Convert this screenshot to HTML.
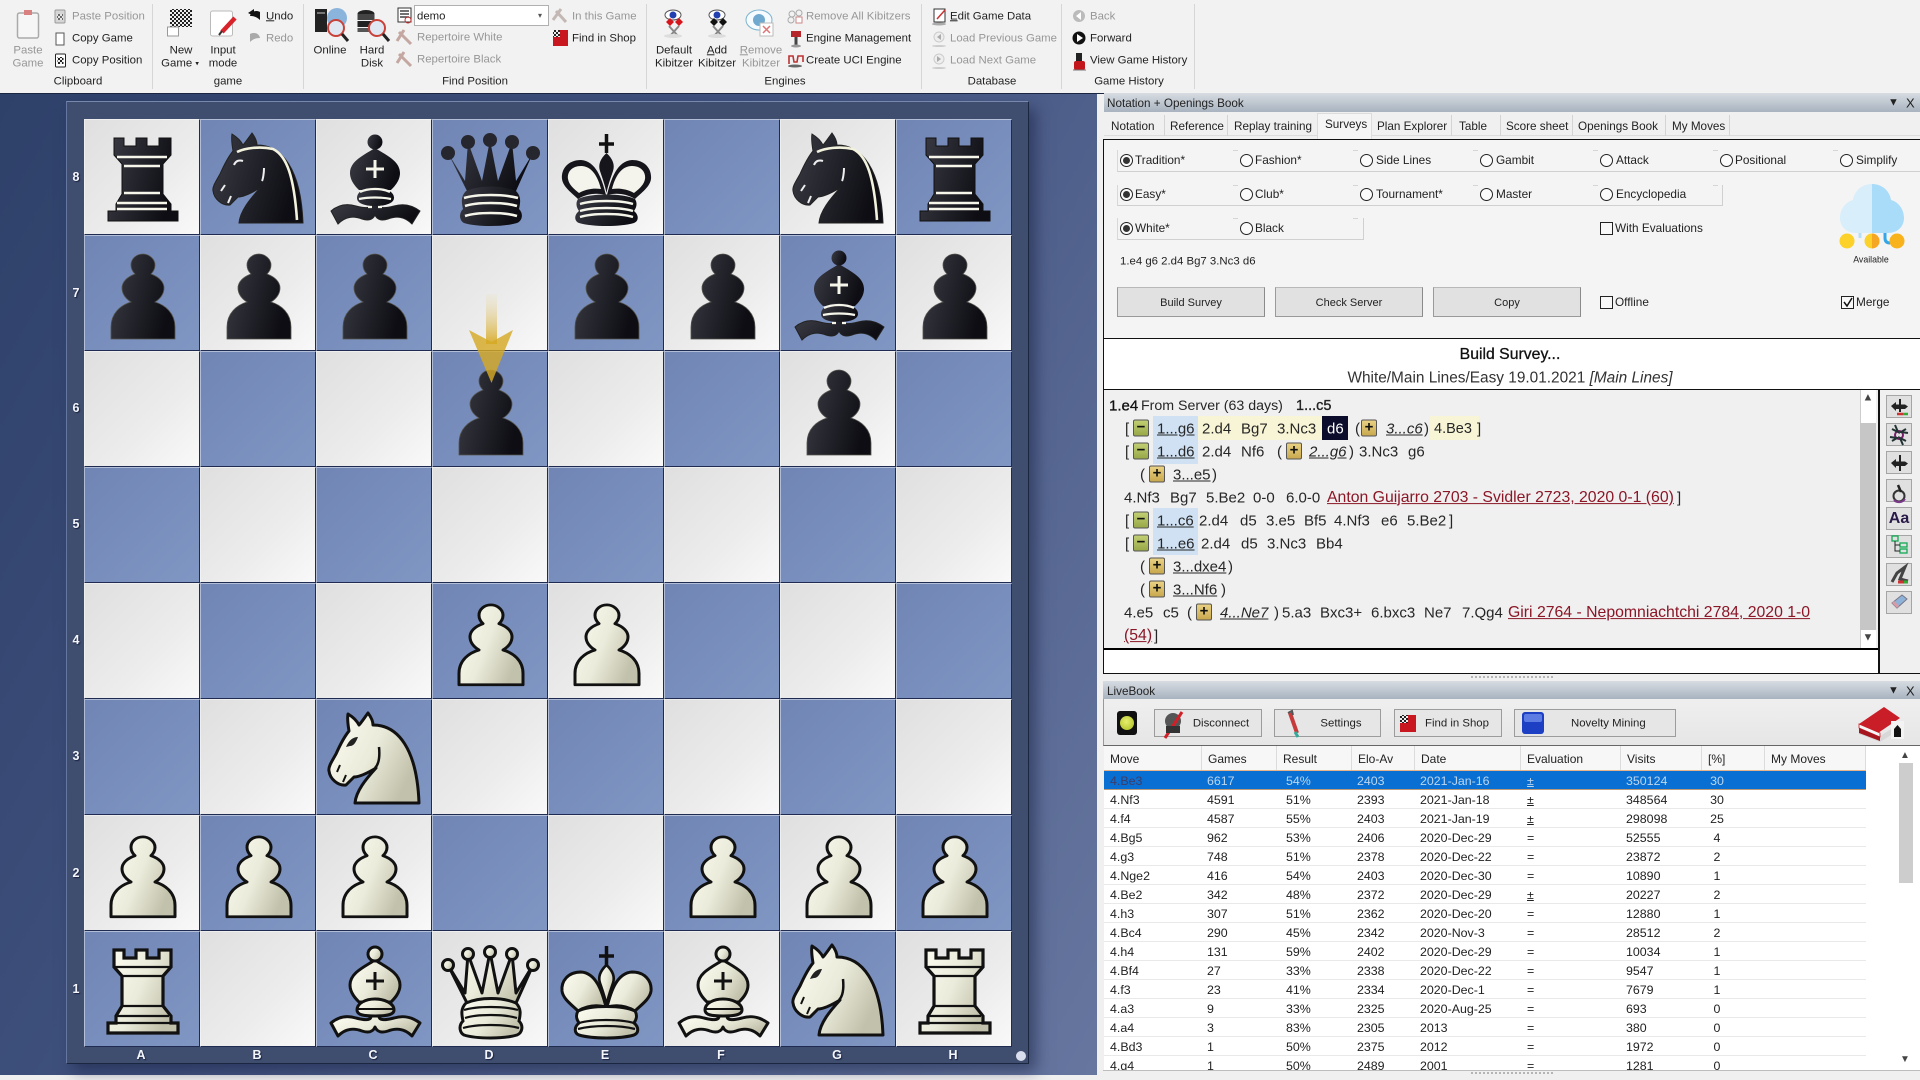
<!DOCTYPE html>
<html><head><meta charset="utf-8"><title>Chess</title>
<style>
html,body{margin:0;padding:0}
body{width:1920px;height:1080px;overflow:hidden;position:relative;background:#f0f0f0;font-family:"Liberation Sans",sans-serif;color:#222}
.t{position:absolute;white-space:nowrap;line-height:1;transform:translateY(calc(-50% + 1px))}
.c{transform:translate(-50%,calc(-50% + 1px));text-align:center}
.d{color:#979797}
#rb{position:absolute;left:0;top:0;width:1920px;height:93px;background:#f2f2f2;border-bottom:1px solid #1b2640;font-size:11.4px;box-sizing:content-box}
.sep{position:absolute;top:4px;height:85px;width:1px;background:#d6d6d6}
#bg{position:absolute;left:0;top:94px;width:1097px;height:981px;background:linear-gradient(120deg,#2e4169 0%,#41527f 45%,#66769f 100%)}
#fr{position:absolute;left:66px;top:101px;width:963px;height:963px;background:#3f4d6f;box-sizing:border-box;border:1px solid #1b2640;border-top-color:#7688ab;border-left-color:#6576a0;box-shadow:7px 7px 14px rgba(25,35,70,.55)}
.lb{color:#f4f6fb;font-weight:bold;font-size:12.5px;text-shadow:1px 1px 1px #1a2340;margin-top:-1px}
.tb{position:absolute;left:1104px;width:816px;height:19px;background:linear-gradient(#d7dce2,#a8b3bf);font-size:11.7px}
.tab{font-size:11.7px}
.vl{position:absolute;top:115px;height:21px;width:1px;background:#d4d4d4}
.r{position:absolute;width:11px;height:11px;border:1px solid #222;border-radius:50%;background:#fbfbfb}
.r.on::after{content:"";position:absolute;left:2px;top:2px;width:7px;height:7px;border-radius:50%;background:#333}
.cb{position:absolute;width:11px;height:11px;border:1px solid #222;background:#f8f8f8}
.grp{position:absolute;box-sizing:border-box;border-left:1px solid #d8d8d8;border-bottom:1px solid #d0d0d0;background:linear-gradient(90deg,transparent 115px,#d5d5d5 115px,#d5d5d5 123px,transparent 123px) 0 0/120px 1px repeat-x}
.btn{position:absolute;box-sizing:border-box;height:30px;top:287px;padding-top:2px;background:#e1e1e1;border:1px solid #9a9a9a;border-right-color:#8a8a8a;border-top-color:#b8b8b8;font-size:11px;display:flex;align-items:center;justify-content:center}
.s{font-size:11.8px}
.n{font-size:15px;color:#262626}
.n i{font-style:italic}
.u{text-decoration:underline}
.lk{color:#8a1626;text-decoration:underline;font-size:15.8px}
.hb{position:absolute;height:24px;background:#cfe1f3}
.hy{position:absolute;height:24px;background:#f8f5d6}
.bx{position:absolute;box-sizing:border-box;width:16px;height:17px;border:1px solid #555;border-radius:2px;font-size:15px;font-weight:bold;line-height:14px;text-align:center;color:#111;transform:translateY(-50%)}
.mi{background:linear-gradient(#c2ce72,#98a948)}
.pl{background:linear-gradient(#e9d183,#c9a94e)}
.sb{position:absolute;left:1886px;width:26px;height:23px;box-sizing:border-box;background:#e0e0e0;border:1px solid #a5a5a5}
.lbtn{position:absolute;top:709px;height:28px;box-sizing:border-box;background:#e6e6e6;border:1px solid #9c9c9c;font-size:11.4px}
table{border-collapse:collapse;table-layout:fixed;font-size:12.4px;color:#222}
td{height:16px;padding:2px 0 0;white-space:nowrap;border-bottom:1px solid #e9e9e9;overflow:hidden}
.hd{position:absolute;top:746px;height:25px;background:#f7f7f7;border-right:1px solid #dcdcdc;box-sizing:border-box;font-size:12px;line-height:27px;padding-left:6px}
tr.sel td{background:#0a6fd2;color:#bcd6ee;border-bottom:1px solid #b89a7a}
tr.sel td:first-child{color:#3f3c66}
td.a{padding-left:6px}td.b{padding-left:5px}td.e{padding-left:9px}td.f{padding-right:33px;text-align:center}
</style></head><body>

<div id="bg"></div>
<div id="fr"></div>
<div class="t c lb" style="left:76px;top:177px">8</div>
<div class="t c lb" style="left:76px;top:293px">7</div>
<div class="t c lb" style="left:76px;top:408px">6</div>
<div class="t c lb" style="left:76px;top:524px">5</div>
<div class="t c lb" style="left:76px;top:640px">4</div>
<div class="t c lb" style="left:76px;top:756px">3</div>
<div class="t c lb" style="left:76px;top:873px">2</div>
<div class="t c lb" style="left:76px;top:989px">1</div>
<div class="t c lb" style="left:141px;top:1055px">A</div>
<div class="t c lb" style="left:257px;top:1055px">B</div>
<div class="t c lb" style="left:373px;top:1055px">C</div>
<div class="t c lb" style="left:489px;top:1055px">D</div>
<div class="t c lb" style="left:605px;top:1055px">E</div>
<div class="t c lb" style="left:721px;top:1055px">F</div>
<div class="t c lb" style="left:837px;top:1055px">G</div>
<div class="t c lb" style="left:953px;top:1055px">H</div>
<div style="position:absolute;left:1016px;top:1051px;width:10px;height:10px;border-radius:50%;background:#d9deec"></div>

<svg width="928" height="928" viewBox="0 0 928 928" style="position:absolute;left:84px;top:119px">
<defs>
<linearGradient id="lq" x1="0" y1="0" x2="1" y2="1"><stop offset="0" stop-color="#dfdfdf"/><stop offset=".6" stop-color="#ececec"/><stop offset="1" stop-color="#f9f9f9"/></linearGradient>
<linearGradient id="dq" x1="0" y1="0" x2="1" y2="1"><stop offset="0" stop-color="#7085b4"/><stop offset="1" stop-color="#8096c3"/></linearGradient>
<linearGradient id="wg" x1="0" y1="0" x2="1" y2=".5"><stop offset="0" stop-color="#fdfdf2"/><stop offset=".55" stop-color="#ebebdb"/><stop offset="1" stop-color="#c2c1ab"/></linearGradient>
<linearGradient id="bg2" x1="0" y1="0" x2="1" y2=".3"><stop offset="0" stop-color="#3b3b45"/><stop offset="1" stop-color="#0d0d13"/></linearGradient>
<linearGradient id="ag" x1="0" y1="0" x2="0" y2="1"><stop offset="0" stop-color="#eadcae" stop-opacity=".15"/><stop offset="1" stop-color="#d9ae32"/></linearGradient>
<pattern id="bd" width="232" height="232" patternUnits="userSpaceOnUse">
<rect width="116" height="116" fill="url(#lq)"/><rect x="116" width="116" height="116" fill="url(#dq)"/>
<rect y="116" width="116" height="116" fill="url(#dq)"/><rect x="116" y="116" width="116" height="116" fill="url(#lq)"/>
<path d="M0 115.5H232M0 231.5H232M115.5 0V232M231.5 0V232" stroke="#1f2b50" stroke-width="1"/>
<path d="M0 .5H232M0 116.5H232M.5 0V232M116.5 0V232" stroke="#fff" stroke-opacity=".45" stroke-width="1"/>
</pattern>

<g id="wR"><path d="M30 19H40V27H52V19H63V27H75V19H87V36L79 45V75L87 85V92H94V102H24V92H32V85L38 75V45L30 36Z" fill="url(#wg)" stroke="#111" stroke-width="3.2" stroke-linejoin="miter"/><path d="M30 36H87M38 45H79M38 75H79M32 85H85M32 92H87" stroke="#111" stroke-width="2.2" fill="none"/></g>
<g id="bR"><path d="M30 19H40V27H52V19H63V27H75V19H87V36L79 45V75L87 85V92H94V102H24V92H32V85L38 75V45L30 36Z" fill="url(#bg2)" stroke="#111" stroke-width="1"/><path d="M33 38H83M40 47H76M40 74H76M33 84H83M33 90H83" stroke="#f6f6ea" stroke-width="2.6" fill="none"/></g>

<g id="wN"><path d="M103 104H39C40 92 50 80 60 69C50 75 42 78 38 78L30 86C22 87 14 80 13 72C12 68 16 62 20 55C24 46 28 38 33 32C32 26 31 20 32 15C37 18 41 22 43 26C45 24 49 18 52 14C55 18 57 22 57 26C82 26 101 50 103 104Z" fill="url(#wg)" stroke="#111" stroke-width="3" stroke-linejoin="round"/><path d="M63 48C64 58 63 65 59 69" stroke="#111" stroke-width="2.5" fill="none"/><path d="M30 48C33 41 37 38 42 38C40 43 38 47 34 47Z" fill="#222"/><path d="M21 73L24 66M27 83L30 76" stroke="#111" stroke-width="2"/></g>
<g id="bN"><path d="M103 104H39C40 92 50 80 60 69C50 75 42 78 38 78L30 86C22 87 14 80 13 72C12 68 16 62 20 55C24 46 28 38 33 32C32 26 31 20 32 15C37 18 41 22 43 26C45 24 49 18 52 14C55 18 57 22 57 26C82 26 101 50 103 104Z" fill="url(#bg2)" stroke="#222" stroke-width="1"/><path d="M37 33C45 29 60 27 73 30C87 37 94 58 97 101" stroke="#f3f2dd" stroke-width="2.6" fill="none"/><path d="M34 46C36 41 40 41 43 42M21 72L25 66M28 84L31 77M64 49C64 54 63 60 62 62" stroke="#eee" stroke-width="2" fill="none"/></g>

<g id="wB"><path d="M55 85C55 90 48 89 40 87C30 84 22 86 15 92L22 105C30 97 38 97 46 100C52 102 57 101 59 96C61 101 66 102 72 100C80 97 88 97 96 105L104 92C96 86 88 84 78 87C70 89 63 90 63 85Z" fill="url(#wg)" stroke="#111" stroke-width="3" stroke-linejoin="round"/><path d="M59 29C48 36 34 42 34 54C34 62 40 68 43 71H75C78 68 84 62 84 54C84 42 70 36 59 29Z" fill="url(#wg)" stroke="#111" stroke-width="3"/><path d="M41 79C41 72 50 68 59 68C68 68 78 72 78 79C78 84 70 85 59 85C48 85 41 84 41 79Z" fill="url(#wg)" stroke="#111" stroke-width="3"/><path d="M41 78H78" stroke="#111" stroke-width="2"/><circle cx="59" cy="23" r="7" fill="url(#wg)" stroke="#111" stroke-width="3"/><path d="M59 41V59M50 50H68" stroke="#111" stroke-width="3"/></g>
<g id="bB"><path d="M55 85C55 90 48 89 40 87C30 84 22 86 15 92L22 105C30 97 38 97 46 100C52 102 57 101 59 96C61 101 66 102 72 100C80 97 88 97 96 105L104 92C96 86 88 84 78 87C70 89 63 90 63 85Z" fill="url(#bg2)" stroke="#222"/><path d="M59 29C48 36 34 42 34 54C34 62 40 68 43 71H75C78 68 84 62 84 54C84 42 70 36 59 29Z" fill="url(#bg2)"/><path d="M41 79C41 72 50 68 59 68C68 68 78 72 78 79C78 84 70 87 59 87C48 87 41 84 41 79Z" fill="url(#bg2)"/><circle cx="59" cy="23" r="7.5" fill="url(#bg2)"/><path d="M59 41V59M50 50H68" stroke="#f5f5ea" stroke-width="3"/><path d="M44 73C52 69 66 69 74 73M43 80C52 78 66 78 75 80M52 88H56M62 88H66" stroke="#f5f5ea" stroke-width="2.2" fill="none"/></g>

<g id="wQ"><path d="M16 34L35 72H84L101 34L84 62L80 23L66 62L58 21L50 62L36 23L33 62Z" fill="url(#wg)" stroke="#111" stroke-width="3" stroke-linejoin="round"/><path d="M34 72C28 78 30 85 31 90C26 95 28 102 32 104C45 108 72 108 85 104C90 102 92 95 87 90C88 85 90 78 84 72C70 66 48 66 34 72Z" fill="url(#wg)" stroke="#111" stroke-width="3"/><path d="M32 79C45 75 72 75 86 79M33 87C45 83 72 83 85 87M31 97C45 93 72 93 87 97" stroke="#111" stroke-width="2.2" fill="none"/><g fill="url(#wg)" stroke="#111" stroke-width="3"><circle cx="16" cy="34" r="5.5"/><circle cx="36" cy="23" r="5.5"/><circle cx="58" cy="21" r="5.5"/><circle cx="80" cy="23" r="5.5"/><circle cx="101" cy="34" r="5.5"/></g></g>
<g id="bQ"><path d="M16 34L35 72H84L101 34L84 62L80 23L66 62L58 21L50 62L36 23L33 62Z" fill="url(#bg2)"/><path d="M34 72C28 78 30 85 31 90C26 95 28 102 32 104C45 108 72 108 85 104C90 102 92 95 87 90C88 85 90 78 84 72C70 66 48 66 34 72Z" fill="url(#bg2)"/><path d="M32 79C45 75 72 75 86 79M33 87C45 83 72 83 85 87M33 97C45 93 72 93 85 97" stroke="#f5f5ea" stroke-width="2.6" fill="none"/><g fill="#26262e"><circle cx="16" cy="34" r="7"/><circle cx="36" cy="23" r="7"/><circle cx="58" cy="21" r="7"/><circle cx="80" cy="23" r="7"/><circle cx="101" cy="34" r="7"/></g></g>

<g id="wK"><path d="M58 76C54 60 48 42 33 41C20 41 13 50 14 60C15 68 24 74 30 80C40 74 50 74 58 76Z" fill="url(#wg)" stroke="#111" stroke-width="3"/><path d="M59 76C63 60 69 42 84 41C97 41 104 50 103 60C102 68 93 74 87 80C77 74 67 74 59 76Z" fill="url(#wg)" stroke="#111" stroke-width="3"/><path d="M58.5 34C52 40 50 46 52 52C54 58 57 66 58.5 74C60 66 63 58 65 52C67 46 65 40 58.5 34Z" fill="url(#wg)" stroke="#111" stroke-width="2.6"/><path d="M58.5 15V34M51 25H66" stroke="#111" stroke-width="3.5"/><path d="M30 80C42 74 75 74 87 80C90 85 88 89 86 92C91 96 91 102 86 104C72 108 45 108 31 104C26 102 26 96 31 92C29 89 27 85 30 80Z" fill="url(#wg)" stroke="#111" stroke-width="3"/><path d="M31 92C45 88 72 88 86 92M30 98C45 94 72 94 87 98" stroke="#111" stroke-width="2.2" fill="none"/></g>
<g id="bK"><path d="M58 76C54 60 48 42 33 41C20 41 13 50 14 60C15 68 24 74 30 80C40 74 50 74 58 76Z" fill="#15151b"/><path d="M59 76C63 60 69 42 84 41C97 41 104 50 103 60C102 68 93 74 87 80C77 74 67 74 59 76Z" fill="#15151b"/><path d="M53 70C50 58 44 47 33 47C24 47 19 53 20 60C21 66 26 70 31 74C38 70 46 69 53 70Z" fill="#f4f4ec"/><path d="M64 70C67 58 73 47 84 47C93 47 98 53 97 60C96 66 91 70 86 74C79 70 71 69 64 70Z" fill="#f4f4ec"/><path d="M58.5 34C52 40 50 46 52 52C54 58 57 66 58.5 74C60 66 63 58 65 52C67 46 65 40 58.5 34Z" fill="#15151b"/><path d="M58.5 15V34M51 25H66" stroke="#111" stroke-width="3.5"/><path d="M30 80C42 74 75 74 87 80C90 85 88 89 86 92C91 96 91 102 86 104C72 108 45 108 31 104C26 102 26 96 31 92C29 89 27 85 30 80Z" fill="url(#bg2)"/><path d="M32 85C45 81 72 81 85 85M32 92C45 88 72 88 85 92M32 98C45 94 72 94 85 98" stroke="#f5f5ea" stroke-width="2.4" fill="none"/></g>

<g id="wP"><path transform="translate(0 4) scale(1 .94)" d="M59 19C52 19 47 24 47 30C47 34 49 37 51 39C43 42 38 47 38 53C38 59 42 64 47 67C37 70 27 78 27 92V104H91V92C91 78 81 70 71 67C76 64 80 59 80 53C80 47 75 42 67 39C69 37 71 34 71 30C71 24 65 19 59 19Z" fill="url(#wg)" stroke="#111" stroke-width="3" stroke-linejoin="round"/></g>
<g id="bP"><path d="M59 19C52 19 47 24 47 30C47 34 49 37 51 39C43 42 38 47 38 53C38 59 42 64 47 67C37 70 27 78 27 92V104H91V92C91 78 81 70 71 67C76 64 80 59 80 53C80 47 75 42 67 39C69 37 71 34 71 30C71 24 65 19 59 19Z" fill="url(#bg2)" stroke="#55554f" stroke-width=".8"/></g>
</defs>
<rect width="928" height="928" fill="url(#bd)"/>
<use href="#bR" x="0" y="0"/><use href="#bN" x="116" y="0"/><use href="#bB" x="232" y="0"/><use href="#bQ" x="348" y="0"/><use href="#bK" x="464" y="0"/><use href="#bN" x="696" y="0"/><use href="#bR" x="812" y="0"/>
<use href="#bP" x="0" y="116"/><use href="#bP" x="116" y="116"/><use href="#bP" x="232" y="116"/><use href="#bP" x="464" y="116"/><use href="#bP" x="580" y="116"/><use href="#bB" x="696" y="116"/><use href="#bP" x="812" y="116"/>
<use href="#bP" x="348" y="232"/><use href="#bP" x="696" y="232"/>
<use href="#wP" x="348" y="464"/><use href="#wP" x="464" y="464"/>
<use href="#wN" x="232" y="580"/>
<use href="#wP" x="0" y="696"/><use href="#wP" x="116" y="696"/><use href="#wP" x="232" y="696"/><use href="#wP" x="580" y="696"/><use href="#wP" x="696" y="696"/><use href="#wP" x="812" y="696"/>
<use href="#wR" x="0" y="812"/><use href="#wB" x="232" y="812"/><use href="#wQ" x="348" y="812"/><use href="#wK" x="464" y="812"/><use href="#wB" x="580" y="812"/><use href="#wN" x="696" y="812"/><use href="#wR" x="812" y="812"/>
<rect x="402" y="175" width="11" height="50" fill="url(#ag)"/>
<path d="M385 211L407.500 264L429 211L407.500 223Z" fill="#d6a926" fill-opacity=".82"/>
</svg>

<!-- RIBBON -->
<div id="rb">
<div class="sep" style="left:152px"></div><div class="sep" style="left:303px"></div><div class="sep" style="left:646px"></div><div class="sep" style="left:921px"></div><div class="sep" style="left:1061px"></div><div class="sep" style="left:1194px"></div>
<svg width="1200" height="93" viewBox="0 0 1200 93" style="position:absolute;left:0;top:0">
<defs><pattern id="ck" width="4" height="4" patternUnits="userSpaceOnUse"><rect width="4" height="4" fill="#eee"/><rect width="2" height="2" fill="#222"/><rect x="2" y="2" width="2" height="2" fill="#222"/></pattern>
<g id="mg"><circle r="8" fill="#dfe8f2" stroke="#c9423a" stroke-width="2"/><path d="M6 6L12 13" stroke="#222" stroke-width="3"/></g>
<g id="ey"><ellipse cx="9" cy="6" rx="8" ry="5" fill="#fff" stroke="#555"/><circle cx="9" cy="6" r="3.500" fill="#2240b0"/></g>
</defs>
<!-- clipboard -->
<rect x="17.500" y="13" width="21" height="25" rx="2" fill="#f6f6f6" stroke="#aaa" stroke-width="1.500"/><rect x="24" y="10" width="8" height="5" fill="#d98080"/>
<rect x="55" y="10" width="10" height="13" rx="1" fill="#d5d5d5" stroke="#999"/><rect x="57" y="14" width="6" height="6" fill="url(#ck)" opacity=".6"/>
<path d="M56 33H64V45H56Z" fill="#fff" stroke="#555"/>
<rect x="55.500" y="54" width="10" height="13" rx="1" fill="#fff" stroke="#222"/><rect x="57.500" y="57" width="6" height="7" fill="url(#ck)"/>
<!-- new game -->
<rect x="170" y="9" width="22" height="18" fill="url(#ck)"/><rect x="167.500" y="27" width="11" height="9" fill="#fff" stroke="#999"/>
<rect x="210.500" y="11" width="22" height="25" rx="2" fill="#fff" stroke="#bbb"/><path d="M222 32L235 18" stroke="#d8232a" stroke-width="4.500"/><path d="M219 35L222 31" stroke="#333" stroke-width="2"/>
<path d="M250 16C251 11 256 10 260 12V20C257 17 254 16 250 16Z" fill="#111"/><path d="M248 13L254 9V16Z" fill="#111"/>
<path d="M260 38C259 33 254 32 250 34V42C253 39 256 38 260 38Z" fill="#a9a9a9"/>
<!-- online -->
<rect x="315" y="9" width="12" height="23" fill="#222"/><rect x="317" y="12" width="8" height="2" fill="#777"/><circle cx="337" cy="18" r="10" fill="#8ab4dc"/><use href="#mg" x="336" y="28"/>
<!-- hard disk -->
<ellipse cx="366" cy="14" rx="8.500" ry="4" fill="#222"/><rect x="357.500" y="14" width="17" height="6" fill="#444"/><rect x="357.500" y="21" width="17" height="6" fill="#222"/><rect x="357.500" y="28" width="17" height="4" fill="#555"/><use href="#mg" x="377" y="28"/>
<rect x="398" y="8" width="13" height="14" fill="#fff" stroke="#333"/><path d="M400 11H409M400 14H409M400 17H409" stroke="#444" stroke-width="1.500"/><circle cx="408" cy="20" r="3" fill="none" stroke="#b33"/>
<path d="M399 32L411 44M404 30L397 41" stroke="#c4a7a0" stroke-width="3"/><path d="M399 54L411 66M404 52L397 63" stroke="#c4a7a0" stroke-width="3"/>
<path d="M556 11L566 22M561 9L553 20" stroke="#c4b8b4" stroke-width="3"/>
<rect x="553" y="30" width="15" height="16" fill="#c8171e"/><rect x="553" y="30" width="7" height="7" fill="url(#ck)"/>
<!-- kibitzers -->
<use href="#ey" x="664" y="9"/><path d="M666 22L670 18L674 22L670 26ZM675 22L679 18L683 22L679 26Z" fill="#d5161c"/><path d="M669 26L678 36M679 26L670 36" stroke="#888" stroke-width="2"/><ellipse cx="673" cy="36" rx="9" ry="2" fill="#ddd"/>
<use href="#ey" x="708" y="9"/><path d="M710 22L714 18L718 22L714 26ZM719 22L723 18L727 22L723 26Z" fill="#111"/><path d="M713 26L722 36M723 26L714 36" stroke="#888" stroke-width="2"/><ellipse cx="717" cy="36" rx="9" ry="2" fill="#ddd"/>
<ellipse cx="759" cy="20" rx="13" ry="10" fill="#f5fbff" stroke="#7cb3cf"/><circle cx="759" cy="20" r="6" fill="#6fa9cf"/><rect x="760" y="23" width="13" height="13" fill="#fff" stroke="#bbb"/><path d="M763 26L770 33M770 26L763 33" stroke="#d77" stroke-width="1.500"/>
<circle cx="792" cy="14" r="3" fill="none" stroke="#aaa"/><circle cx="799" cy="13" r="3" fill="none" stroke="#aaa"/><circle cx="791" cy="20" r="3" fill="none" stroke="#aaa"/><rect x="796" y="17" width="6" height="6" fill="#fff" stroke="#c88"/>
<rect x="791" y="31" width="10" height="6" fill="#b5262a"/><path d="M796 37V46" stroke="#444" stroke-width="3"/><ellipse cx="796" cy="46" rx="5" ry="1.500" fill="#999"/>
<path d="M789 64V56H793L794 62H797L798 56H803V62" fill="none" stroke="#b33" stroke-width="1.600"/><ellipse cx="795" cy="66" rx="7" ry="1.500" fill="#666"/>
<!-- db -->
<rect x="934" y="9" width="11" height="13" fill="#fff" stroke="#333"/><path d="M937 19L945 10" stroke="#c33" stroke-width="1.500"/><ellipse cx="939" cy="24" rx="7" ry="1.500" fill="#aaa"/>
<circle cx="939" cy="37" r="5" fill="#eee" stroke="#ccc"/><path d="M941 34L937 37L941 40Z" fill="#aaa"/><ellipse cx="939" cy="46" rx="7" ry="1" fill="#ccc"/>
<circle cx="939" cy="59" r="5" fill="#eee" stroke="#ccc"/><path d="M937 56L941 59L937 62Z" fill="#aaa"/><ellipse cx="939" cy="68" rx="7" ry="1" fill="#ccc"/>
<!-- history -->
<circle cx="1079" cy="16" r="6" fill="#bbb"/><path d="M1081 12L1076 16L1081 20Z" fill="#fff"/>
<circle cx="1079" cy="38" r="6.500" fill="#111"/><path d="M1077 34L1083 38L1077 42Z" fill="#fff"/>
<rect x="1074" y="61" width="11" height="9" rx="2" fill="#c3161c"/><rect x="1076" y="53" width="6" height="8" fill="#222"/><path d="M1073 70H1086" stroke="#777"/>
</svg>
<div class="t d c" style="left:28px;top:50px">Paste</div><div class="t d c" style="left:28px;top:63px">Game</div>
<div class="t d" style="left:72px;top:16px">Paste Position</div><div class="t" style="left:72px;top:38px">Copy Game</div><div class="t" style="left:72px;top:60px">Copy Position</div>
<div class="t c" style="left:78px;top:81px">Clipboard</div>
<div class="t c" style="left:181px;top:50px">New</div><div class="t c" style="left:180px;top:63px">Game <span style="font-size:7px;vertical-align:1px">▾</span></div>
<div class="t c" style="left:223px;top:50px">Input</div><div class="t c" style="left:223px;top:63px">mode</div>
<div class="t" style="left:266px;top:16px"><span class="u">U</span>ndo</div><div class="t d" style="left:266px;top:38px">Redo</div>
<div class="t c" style="left:228px;top:81px">game</div>
<div class="t c" style="left:330px;top:50px">Online</div>
<div class="t c" style="left:372px;top:50px">Hard</div><div class="t c" style="left:372px;top:63px">Disk</div>
<div style="position:absolute;left:414px;top:5px;width:135px;height:21px;box-sizing:border-box;background:#fff;border:1px solid #b0b0b0"></div>
<div class="t" style="left:417px;top:16px">demo</div><div class="t" style="left:538px;top:15px;font-size:8px;color:#555">▾</div>
<div class="t d" style="left:417px;top:37px">Repertoire White</div><div class="t d" style="left:417px;top:59px">Repertoire Black</div>
<div class="t d" style="left:572px;top:16px">In this Game</div><div class="t" style="left:572px;top:38px">Find in Shop</div>
<div class="t c" style="left:475px;top:81px">Find Position</div>
<div class="t c" style="left:674px;top:50px">Default</div><div class="t c" style="left:674px;top:63px">Kibitzer</div>
<div class="t c" style="left:717px;top:50px"><span class="u">A</span>dd</div><div class="t c" style="left:717px;top:63px">Kibitzer</div>
<div class="t d c" style="left:761px;top:50px"><span class="u">R</span>emove</div><div class="t d c" style="left:761px;top:63px">Kibitzer</div>
<div class="t d" style="left:806px;top:16px">Remove All Kibitzers</div><div class="t" style="left:806px;top:38px">Engine Management</div><div class="t" style="left:806px;top:60px">Create UCI Engine</div>
<div class="t c" style="left:785px;top:81px">Engines</div>
<div class="t" style="left:950px;top:16px"><span class="u">E</span>dit Game Data</div><div class="t d" style="left:950px;top:38px">Load Previous Game</div><div class="t d" style="left:950px;top:60px">Load Next Game</div>
<div class="t c" style="left:992px;top:81px">Database</div>
<div class="t d" style="left:1090px;top:16px">Back</div><div class="t" style="left:1090px;top:38px">Forward</div><div class="t" style="left:1090px;top:60px">View Game History</div>
<div class="t c" style="left:1129px;top:81px">Game History</div>
</div>

<!-- PANEL 1 -->
<div class="tb" style="top:93px"></div>
<div class="t" style="left:1107px;top:103px;font-size:11.7px">Notation + Openings Book</div>
<div class="t" style="left:1888px;top:102px;font-size:11px">▼</div><div class="t" style="left:1906px;top:102px;font-size:13px">X</div>
<div style="position:absolute;left:1104px;top:112px;width:816px;height:27px;background:#f0f0f0"></div>
<div style="position:absolute;left:1104px;top:135px;width:816px;height:1px;background:#dcdcdc"></div>
<div style="position:absolute;left:1317px;top:113px;width:55px;height:26px;background:#f5f5f5;border:1px solid #dcdcdc;border-bottom:none;box-sizing:border-box"></div>
<div class="vl" style="left:1164px"></div><div class="vl" style="left:1227px"></div><div class="vl" style="left:1451px"></div><div class="vl" style="left:1500px"></div><div class="vl" style="left:1572px"></div><div class="vl" style="left:1665px"></div><div class="vl" style="left:1729px"></div>
<div class="t tab" style="left:1111px;top:126px">Notation</div><div class="t tab" style="left:1170px;top:126px">Reference</div><div class="t tab" style="left:1234px;top:126px">Replay training</div><div class="t tab" style="left:1325px;top:124px">Surveys</div><div class="t tab" style="left:1377px;top:126px">Plan Explorer</div><div class="t tab" style="left:1459px;top:126px">Table</div><div class="t tab" style="left:1506px;top:126px">Score sheet</div><div class="t tab" style="left:1578px;top:126px">Openings Book</div><div class="t tab" style="left:1672px;top:126px">My Moves</div>

<div style="position:absolute;left:1103px;top:139px;width:817px;height:200px;box-sizing:border-box;background:#f4f4f4;border:1px solid #111;border-right:none"></div>
<div class="grp" style="left:1117px;top:150px;width:803px;height:22px"></div>
<div class="grp" style="left:1117px;top:185px;width:606px;height:21px;border-right:1px solid #d0d0d0"></div>
<div class="grp" style="left:1117px;top:218px;width:247px;height:22px;border-right:1px solid #d0d0d0"></div>

<div class="r on" style="left:1120px;top:154px"></div><div class="r" style="left:1240px;top:154px"></div><div class="r" style="left:1360px;top:154px"></div><div class="r" style="left:1480px;top:154px"></div><div class="r" style="left:1600px;top:154px"></div><div class="r" style="left:1720px;top:154px"></div><div class="r" style="left:1840px;top:154px"></div>
<div class="t s" style="left:1135px;top:160px">Tradition*</div><div class="t s" style="left:1255px;top:160px">Fashion*</div><div class="t s" style="left:1376px;top:160px">Side Lines</div><div class="t s" style="left:1496px;top:160px">Gambit</div><div class="t s" style="left:1616px;top:160px">Attack</div><div class="t s" style="left:1735px;top:160px">Positional</div><div class="t s" style="left:1856px;top:160px">Simplify</div>
<div class="r on" style="left:1120px;top:188px"></div><div class="r" style="left:1240px;top:188px"></div><div class="r" style="left:1360px;top:188px"></div><div class="r" style="left:1480px;top:188px"></div><div class="r" style="left:1600px;top:188px"></div>
<div class="t s" style="left:1135px;top:194px">Easy*</div><div class="t s" style="left:1255px;top:194px">Club*</div><div class="t s" style="left:1376px;top:194px">Tournament*</div><div class="t s" style="left:1496px;top:194px">Master</div><div class="t s" style="left:1616px;top:194px">Encyclopedia</div>
<div class="r on" style="left:1120px;top:222px"></div><div class="r" style="left:1240px;top:222px"></div>
<div class="t s" style="left:1135px;top:228px">White*</div><div class="t s" style="left:1255px;top:228px">Black</div>
<div class="cb" style="left:1600px;top:222px"></div><div class="t s" style="left:1615px;top:228px">With Evaluations</div>
<div class="t s" style="left:1120px;top:261px;font-size:11.4px">1.e4 g6 2.d4 Bg7 3.Nc3 d6</div>
<div class="btn" style="left:1117px;width:148px">Build Survey</div><div class="btn" style="left:1275px;width:148px">Check Server</div><div class="btn" style="left:1433px;width:148px">Copy</div>
<div class="cb" style="left:1600px;top:296px"></div><div class="t s" style="left:1615px;top:302px">Offline</div>
<div class="cb" style="left:1841px;top:296px"></div><div class="t s" style="left:1856px;top:302px">Merge</div>
<svg width="14" height="14" style="position:absolute;left:1841px;top:295px"><path d="M3 7L6 11L11 3" stroke="#111" stroke-width="1.500" fill="none"/></svg>
<svg width="80" height="72" viewBox="1835 180 80 72" style="position:absolute;left:1835px;top:180px">
<path d="M1872 184C1861 184 1854 192 1853 200C1845 202 1840 210 1840 218C1840 227 1847 233 1856 233H1872Z" fill="#d8eefb"/><path d="M1872 184C1883 184 1890 192 1891 200C1899 202 1904 210 1904 218C1904 227 1897 233 1888 233H1872Z" fill="#a9dcf9"/>
<path d="M1885 233V238Q1885 243 1890 243" stroke="#35a7e8" stroke-width="3" fill="none"/>
<path d="M1860 233V238" stroke="#b7e0f8" stroke-width="3"/>
<circle cx="1847" cy="241" r="7.500" fill="#fbd12a"/><circle cx="1872" cy="241" r="7.500" fill="#fbd12a"/><path d="M1872 233.500a7.500 7.500 0 0 1 0 15Z" fill="#f5a623"/><circle cx="1897" cy="241" r="7.500" fill="#f8b21c"/>
</svg>
<div class="t c" style="left:1871px;top:259px;font-size:8.800px">Available</div>

<!-- PANEL 2 -->
<div style="position:absolute;left:1103px;top:338px;width:817px;height:51px;box-sizing:border-box;background:#fff;border:1px solid #111;border-right:none;border-bottom:none"></div>
<div class="t c" style="left:1510px;top:354px;font-size:15.800px;color:#111;-webkit-text-stroke:.3px #111">Build Survey...</div>
<div class="t c" style="left:1510px;top:377px;font-size:15.400px;color:#333">White/Main Lines/Easy 19.01.2021 <i>[Main Lines]</i></div>
<div style="position:absolute;left:1103px;top:389px;width:817px;height:285px;box-sizing:border-box;background:#f0f0f0;border:1px solid #111;border-right:none;border-width:1px 0 1px 1px"></div>
<div style="position:absolute;left:1104px;top:650px;width:774px;height:23px;background:#fff"></div>
<div style="position:absolute;left:1104px;top:648px;width:774px;height:2px;background:#000"></div>
<div style="position:absolute;left:1878px;top:389px;width:1.500px;height:285px;background:#111"></div>
<!-- scrollbar -->
<div style="position:absolute;left:1860px;top:390px;width:16px;height:258px;background:#fff;border-left:1px solid #ccc;box-sizing:border-box"></div>
<div style="position:absolute;left:1860px;top:423px;width:16px;height:207px;background:#c6c6c6"></div>
<div class="t c" style="left:1868px;top:397px;font-size:11px;color:#444">▲</div><div class="t c" style="left:1868px;top:637px;font-size:11px;color:#444">▼</div>

<div class="hb" style="left:1153px;top:416px;width:45px"></div>
<div class="hy" style="left:1198px;top:416px;width:124px"></div>
<div class="hy" style="left:1430px;top:416px;width:49px"></div>
<div class="hb" style="left:1153px;top:440px;width:45px"></div>
<div class="hb" style="left:1153px;top:508px;width:45px"></div>
<div class="hb" style="left:1153px;top:531px;width:45px"></div>
<div style="position:absolute;left:1322px;top:416px;width:26px;height:24px;background:#0b0b2c"></div>

<div class="t n" style="left:1109px;top:405px;color:#111;-webkit-text-stroke:.3px #111">1.e4</div><div class="t n" style="left:1141px;top:405px;font-size:14.200px">From Server (63 days)</div><div class="t n" style="left:1296px;top:405px;-webkit-text-stroke:.3px #111;font-size:14.500px">1...c5</div>

<div class="t n" style="left:1125px;top:428px">[</div><div class="bx mi" style="left:1133px;top:428px">−</div><div class="t n u" style="left:1157px;top:428px">1...g6</div><div class="t n" style="left:1202px;top:428px">2.d4</div><div class="t n" style="left:1241px;top:428px">Bg7</div><div class="t n" style="left:1277px;top:428px">3.Nc3</div><div class="t n" style="left:1327px;top:428px;color:#fff">d6</div><div class="t n" style="left:1355px;top:428px">(</div><div class="bx pl" style="left:1361px;top:428px">+</div><div class="t n u" style="left:1386px;top:428px"><i>3...c6</i></div><div class="t n" style="left:1424px;top:428px">)</div><div class="t n" style="left:1434px;top:428px;font-size:14.500px">4.Be3</div><div class="t n" style="left:1477px;top:428px">]</div>

<div class="t n" style="left:1125px;top:451px">[</div><div class="bx mi" style="left:1133px;top:451px">−</div><div class="t n u" style="left:1157px;top:451px">1...d6</div><div class="t n" style="left:1202px;top:451px">2.d4</div><div class="t n" style="left:1241px;top:451px">Nf6</div><div class="t n" style="left:1277px;top:451px">(</div><div class="bx pl" style="left:1286px;top:451px">+</div><div class="t n u" style="left:1309px;top:451px"><i>2...g6</i></div><div class="t n" style="left:1349px;top:451px">)</div><div class="t n" style="left:1359px;top:451px">3.Nc3</div><div class="t n" style="left:1408px;top:451px">g6</div>

<div class="t n" style="left:1140px;top:474px">(</div><div class="bx pl" style="left:1149px;top:474px">+</div><div class="t n u" style="left:1173px;top:474px">3...e5</div><div class="t n" style="left:1212px;top:474px">)</div>

<div class="t n" style="left:1124px;top:497px">4.Nf3</div><div class="t n" style="left:1170px;top:497px">Bg7</div><div class="t n" style="left:1206px;top:497px">5.Be2</div><div class="t n" style="left:1253px;top:497px">0-0</div><div class="t n" style="left:1286px;top:497px">6.0-0</div><div class="t n lk" style="left:1327px;top:497px">Anton Guijarro 2703 - Svidler 2723, 2020 0-1 (60)</div><div class="t n" style="left:1677px;top:497px">]</div>

<div class="t n" style="left:1125px;top:520px">[</div><div class="bx mi" style="left:1133px;top:520px">−</div><div class="t n u" style="left:1157px;top:520px">1...c6</div><div class="t n" style="left:1199px;top:520px">2.d4</div><div class="t n" style="left:1240px;top:520px">d5</div><div class="t n" style="left:1266px;top:520px">3.e5</div><div class="t n" style="left:1304px;top:520px">Bf5</div><div class="t n" style="left:1334px;top:520px">4.Nf3</div><div class="t n" style="left:1381px;top:520px">e6</div><div class="t n" style="left:1407px;top:520px">5.Be2</div><div class="t n" style="left:1449px;top:520px">]</div>

<div class="t n" style="left:1125px;top:543px">[</div><div class="bx mi" style="left:1133px;top:543px">−</div><div class="t n u" style="left:1157px;top:543px">1...e6</div><div class="t n" style="left:1201px;top:543px">2.d4</div><div class="t n" style="left:1241px;top:543px">d5</div><div class="t n" style="left:1267px;top:543px">3.Nc3</div><div class="t n" style="left:1316px;top:543px">Bb4</div>

<div class="t n" style="left:1140px;top:566px">(</div><div class="bx pl" style="left:1149px;top:566px">+</div><div class="t n u" style="left:1173px;top:566px">3...dxe4</div><div class="t n" style="left:1228px;top:566px">)</div>
<div class="t n" style="left:1140px;top:589px">(</div><div class="bx pl" style="left:1149px;top:589px">+</div><div class="t n u" style="left:1173px;top:589px">3...Nf6</div><div class="t n" style="left:1221px;top:589px">)</div>

<div class="t n" style="left:1124px;top:612px">4.e5</div><div class="t n" style="left:1163px;top:612px">c5</div><div class="t n" style="left:1187px;top:612px">(</div><div class="bx pl" style="left:1196px;top:612px">+</div><div class="t n u" style="left:1220px;top:612px"><i>4...Ne7</i></div><div class="t n" style="left:1274px;top:612px">)</div><div class="t n" style="left:1282px;top:612px">5.a3</div><div class="t n" style="left:1320px;top:612px">Bxc3+</div><div class="t n" style="left:1371px;top:612px">6.bxc3</div><div class="t n" style="left:1424px;top:612px">Ne7</div><div class="t n" style="left:1462px;top:612px">7.Qg4</div><div class="t n lk" style="left:1508px;top:612px">Giri 2764 - Nepomniachtchi 2784, 2020 1-0</div>
<div class="t n lk" style="left:1124px;top:635px">(54)</div><div class="t n" style="left:1154px;top:635px">]</div>

<!-- side buttons -->
<div class="sb" style="top:395px"></div><div class="sb" style="top:423px"></div><div class="sb" style="top:451px"></div><div class="sb" style="top:479px"></div><div class="sb" style="top:507px"></div><div class="sb" style="top:535px"></div><div class="sb" style="top:563px"></div><div class="sb" style="top:591px"></div>
<svg width="26" height="224" viewBox="0 0 26 224" style="position:absolute;left:1886px;top:395px">
<path d="M5 11L10 7V9.500H13V4H15V9.500H19L22 11.500L19 14H15V17H13V14H10V16Z" fill="#222"/><path d="M11 19H17" stroke="#c33" stroke-width="2.500"/><path d="M17 19H22" stroke="#3a3" stroke-width="2.500"/>
<circle cx="13" cy="40" r="4" fill="none" stroke="#7a1a6a" stroke-width="2"/><path d="M6 34L12 37L9 30M20 46L14 43L17 50M20 34L15 37L22 38M6 46L11 43L4 42" stroke="#233" stroke-width="2" fill="none"/>
<path d="M5 68L10 64V66.500H13V60H15V66.500H19L22 68.500L19 71H15V76H13V71H10V73Z" fill="#222"/>
<circle cx="13" cy="101" r="5.500" fill="none" stroke="#333" stroke-width="2"/><path d="M12 90L15 97" stroke="#222" stroke-width="2.500"/><path d="M8 105C11 108 16 108 19 104" stroke="#7a3a8a" stroke-width="2" fill="none"/>
<rect x="6" y="141" width="6" height="5" fill="none" stroke="#1a5" stroke-width="1.300"/><rect x="14" y="148" width="7" height="4" fill="none" stroke="#1a5" stroke-width="1.300"/><rect x="14" y="154" width="7" height="4" fill="none" stroke="#1a5" stroke-width="1.300"/><path d="M9 146V156H14M9 150H14" stroke="#222" fill="none"/>
<path d="M6 187L11 178L19 172L14 184L22 186" stroke="#444" stroke-width="3" fill="none"/><path d="M12 187H18" stroke="#c33" stroke-width="3"/><path d="M18 187H22" stroke="#3a3" stroke-width="3"/>
<path d="M6 208L16 200L21 204L11 213Z" fill="#8fb2d8" stroke="#778"/><path d="M6 208L11 213L13 211L8 206Z" fill="#d89aa5"/>
</svg>
<div class="t c" style="left:1899px;top:518px;font-size:16px;font-weight:bold;color:#2a1a4a">Aa</div>

<!-- splitter -->
<div style="position:absolute;left:1471px;top:676px;width:84px;height:2px;background:repeating-linear-gradient(90deg,#b5b5b5 0 2px,transparent 2px 4px)"></div>

<!-- PANEL 3 -->
<div class="tb" style="top:681px;left:1103px;width:817px;height:18px"></div>
<div class="t" style="left:1107px;top:691px;font-size:11.7px">LiveBook</div>
<div class="t" style="left:1888px;top:690px;font-size:11px">▼</div><div class="t" style="left:1906px;top:690px;font-size:13px">X</div>
<div style="position:absolute;left:1103px;top:699px;width:817px;height:47px;background:linear-gradient(#efefef,#e6e6e6);border-bottom:1px solid #666;box-sizing:border-box;border-left:1px solid #999"></div>
<div style="position:absolute;left:1117px;top:711px;width:20px;height:24px;border-radius:3px;background:#111"></div>
<div style="position:absolute;left:1120px;top:716px;width:14px;height:14px;border-radius:50%;background:radial-gradient(circle at 45% 40%,#e7ee6d,#a9bd1e)"></div>
<div class="lbtn" style="left:1154px;width:108px"></div><div class="lbtn" style="left:1274px;width:107px"></div><div class="lbtn" style="left:1394px;width:108px"></div><div class="lbtn" style="left:1514px;width:162px"></div>
<svg width="560" height="46" viewBox="1150 699 560 46" style="position:absolute;left:1150px;top:699px">
<circle cx="1173" cy="721" r="8" fill="#555"/><path d="M1165 738L1182 712" stroke="#d02028" stroke-width="3"/><rect x="1166" y="726" width="14" height="7" fill="#333"/>
<path d="M1290 713L1297 733" stroke="#c73a3a" stroke-width="4"/><path d="M1288 713L1292 711L1293 715" stroke="#555" stroke-width="2" fill="none"/><path d="M1295 732L1298 737" stroke="#3a9" stroke-width="3"/>
<rect x="1400" y="715" width="16" height="17" fill="#c8171e"/><rect x="1400" y="715" width="8" height="8" fill="url(#ck)"/>
<rect x="1522" y="712" width="22" height="22" rx="3" fill="#1c3fc4"/><rect x="1524" y="714" width="18" height="8" rx="2" fill="#5c7ce4"/>
</svg>
<div class="t c" style="left:1221px;top:723px;font-size:11.400px">Disconnect</div><div class="t c" style="left:1341px;top:723px;font-size:11.400px">Settings</div><div class="t" style="left:1425px;top:723px;font-size:11.400px">Find in Shop</div><div class="t" style="left:1571px;top:723px;font-size:11.400px">Novelty Mining</div>
<svg width="50" height="38" viewBox="0 0 50 38" style="position:absolute;left:1858px;top:704px">
<path d="M1 24V30L22 38L38 28V22L22 32Z" fill="#d8d8d8"/>
<path d="M1 20L26 3L42 14L20 29Z" fill="#c91d27"/>
<path d="M1 20V24L22 33V29Z" fill="#f6f6f6" stroke="#c91d27" stroke-width=".8"/>
<path d="M1 24V29L22 37V33Z" fill="#a5161f"/>
<rect x="33" y="17" width="13" height="18" fill="#f3f3f3"/><path d="M36 33V25L39.500 21L43 25V33Z" fill="#111"/></svg>

<!-- table header -->
<div style="position:absolute;left:1104px;top:746px;width:816px;height:324px;background:#fff"></div>
<div class="hd" style="left:1104px;width:98px">Move</div><div class="hd" style="left:1202px;width:75px">Games</div><div class="hd" style="left:1277px;width:75px">Result</div><div class="hd" style="left:1352px;width:63px">Elo-Av</div><div class="hd" style="left:1415px;width:106px">Date</div><div class="hd" style="left:1521px;width:100px">Evaluation</div><div class="hd" style="left:1621px;width:81px">Visits</div><div class="hd" style="left:1702px;width:63px">[%]</div><div class="hd" style="left:1765px;width:101px">My Moves</div>
<div style="position:absolute;left:1104px;top:770px;width:762px;height:1px;background:#e5b48a"></div>
<div style="position:absolute;left:1104px;top:771px;width:762px;height:299px;overflow:hidden">
<table style="width:762px">
<colgroup><col style="width:98px"><col style="width:75px"><col style="width:75px"><col style="width:63px"><col style="width:106px"><col style="width:100px"><col style="width:81px"><col style="width:63px"><col style="width:101px"></colgroup>
<tr class="sel"><td class="a">4.Be3</td><td class="b">6617</td><td class="e">54%</td><td class="b">2403</td><td class="b">2021-Jan-16</td><td class="a"><span class="u">±</span></td><td class="b">350124</td><td class="f">30</td><td></td></tr>
<tr><td class="a">4.Nf3</td><td class="b">4591</td><td class="e">51%</td><td class="b">2393</td><td class="b">2021-Jan-18</td><td class="a"><span class="u">±</span></td><td class="b">348564</td><td class="f">30</td><td></td></tr>
<tr><td class="a">4.f4</td><td class="b">4587</td><td class="e">55%</td><td class="b">2403</td><td class="b">2021-Jan-19</td><td class="a"><span class="u">±</span></td><td class="b">298098</td><td class="f">25</td><td></td></tr>
<tr><td class="a">4.Bg5</td><td class="b">962</td><td class="e">53%</td><td class="b">2406</td><td class="b">2020-Dec-29</td><td class="a">=</td><td class="b">52555</td><td class="f">4</td><td></td></tr>
<tr><td class="a">4.g3</td><td class="b">748</td><td class="e">51%</td><td class="b">2378</td><td class="b">2020-Dec-22</td><td class="a">=</td><td class="b">23872</td><td class="f">2</td><td></td></tr>
<tr><td class="a">4.Nge2</td><td class="b">416</td><td class="e">54%</td><td class="b">2403</td><td class="b">2020-Dec-30</td><td class="a">=</td><td class="b">10890</td><td class="f">1</td><td></td></tr>
<tr><td class="a">4.Be2</td><td class="b">342</td><td class="e">48%</td><td class="b">2372</td><td class="b">2020-Dec-29</td><td class="a"><span class="u">±</span></td><td class="b">20227</td><td class="f">2</td><td></td></tr>
<tr><td class="a">4.h3</td><td class="b">307</td><td class="e">51%</td><td class="b">2362</td><td class="b">2020-Dec-20</td><td class="a">=</td><td class="b">12880</td><td class="f">1</td><td></td></tr>
<tr><td class="a">4.Bc4</td><td class="b">290</td><td class="e">45%</td><td class="b">2342</td><td class="b">2020-Nov-3</td><td class="a">=</td><td class="b">28512</td><td class="f">2</td><td></td></tr>
<tr><td class="a">4.h4</td><td class="b">131</td><td class="e">59%</td><td class="b">2402</td><td class="b">2020-Dec-29</td><td class="a">=</td><td class="b">10034</td><td class="f">1</td><td></td></tr>
<tr><td class="a">4.Bf4</td><td class="b">27</td><td class="e">33%</td><td class="b">2338</td><td class="b">2020-Dec-22</td><td class="a">=</td><td class="b">9547</td><td class="f">1</td><td></td></tr>
<tr><td class="a">4.f3</td><td class="b">23</td><td class="e">41%</td><td class="b">2334</td><td class="b">2020-Dec-1</td><td class="a">=</td><td class="b">7679</td><td class="f">1</td><td></td></tr>
<tr><td class="a">4.a3</td><td class="b">9</td><td class="e">33%</td><td class="b">2325</td><td class="b">2020-Aug-25</td><td class="a">=</td><td class="b">693</td><td class="f">0</td><td></td></tr>
<tr><td class="a">4.a4</td><td class="b">3</td><td class="e">83%</td><td class="b">2305</td><td class="b">2013</td><td class="a">=</td><td class="b">380</td><td class="f">0</td><td></td></tr>
<tr><td class="a">4.Bd3</td><td class="b">1</td><td class="e">50%</td><td class="b">2375</td><td class="b">2012</td><td class="a">=</td><td class="b">1972</td><td class="f">0</td><td></td></tr>
<tr><td class="a">4.g4</td><td class="b">1</td><td class="e">50%</td><td class="b">2489</td><td class="b">2001</td><td class="a">=</td><td class="b">1281</td><td class="f">0</td><td></td></tr>
</table>
</div>
<!-- table scrollbar -->
<div style="position:absolute;left:1899px;top:763px;width:14px;height:120px;background:#cdcdcd"></div>
<div class="t c" style="left:1905px;top:755px;font-size:10px;color:#444">▲</div><div class="t c" style="left:1905px;top:1059px;font-size:10px;color:#444">▼</div>
<div style="position:absolute;left:1103px;top:1070px;width:817px;height:1px;background:#bdbdbd"></div>
<div style="position:absolute;left:1471px;top:1072px;width:84px;height:2px;background:repeating-linear-gradient(90deg,#b5b5b5 0 2px,transparent 2px 4px)"></div>
</body></html>
